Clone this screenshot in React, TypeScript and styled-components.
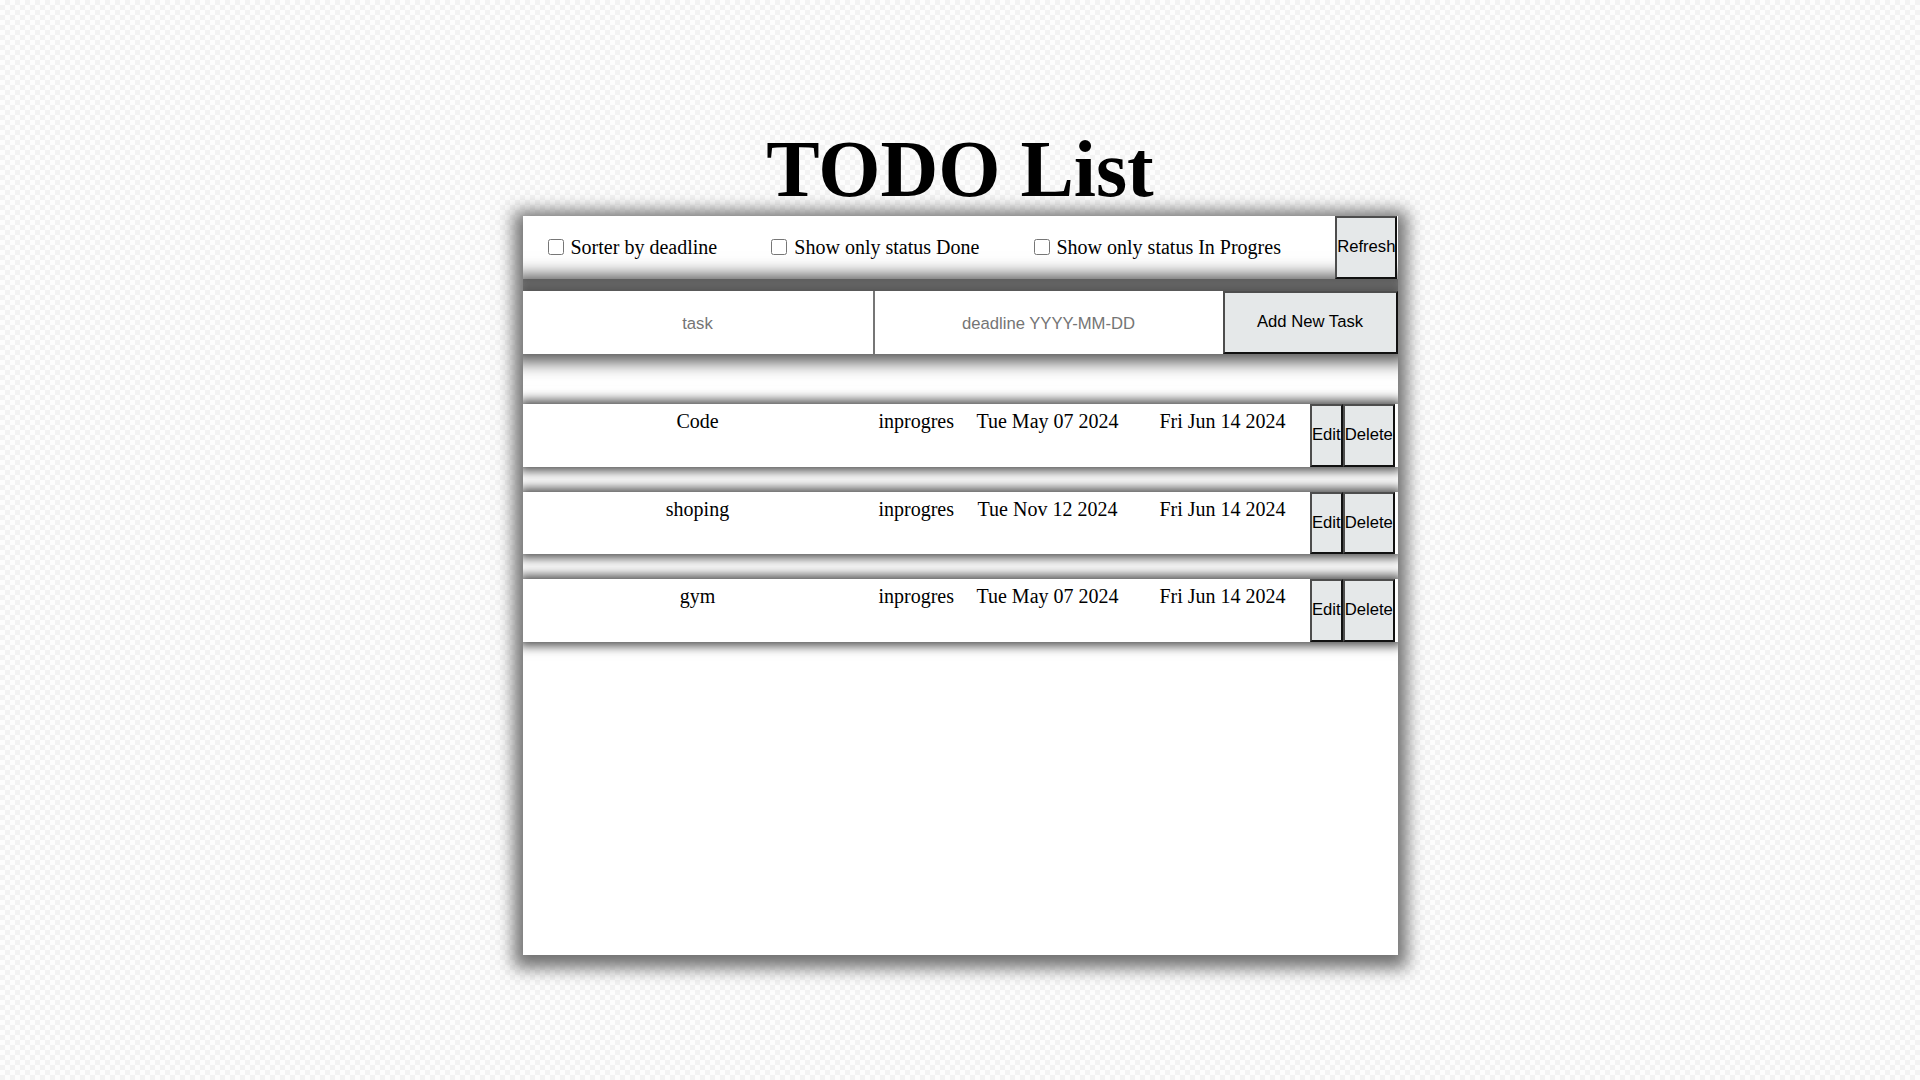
import React from "react";
import styled, { createGlobalStyle } from "styled-components";

const GlobalStyle = createGlobalStyle`
  html, body { margin: 0; padding: 0; }
  body {
    min-height: 100vh;
    background-color: #fafafa;
    background-image: repeating-conic-gradient(#f3f3f3 0% 25%, #fdfdfd 0% 50%);
    background-size: 10px 10px;
    font-family: "Liberation Serif", "Times New Roman", serif;
    color: #000;
  }
`;

const Page = styled.div`
  display: flex;
  flex-direction: column;
  align-items: center;
  padding-top: 125px;
`;

const Title = styled.h1`
  margin: 0;
  font-family: "Liberation Serif", "Times New Roman", serif;
  font-size: 80px;
  line-height: 88px;
  font-weight: 700;
`;

const Panel = styled.main`
  margin-top: 3px;
  width: 875px;
  height: 739px;
  background: #fff;
  box-shadow: 0 4px 16px 9px rgb(112, 112, 112);
  overflow: hidden;
`;

const FilterBar = styled.div`
  display: flex;
  justify-content: space-between;
  align-items: stretch;
  height: 62.5px;
  box-sizing: border-box;
  padding-left: 25px;
  background: #fff;
  box-shadow: 0 0 8px 4px #555;
`;

const FilterLabel = styled.label`
  display: flex;
  align-items: center;
  gap: 7px;
  font-size: 20px;
  white-space: nowrap;
`;

const Check = styled.input.attrs({ type: "checkbox" })`
  width: 16px;
  height: 16px;
  margin: 0;
`;

const Button = styled.button`
  font-family: "Liberation Sans", Arial, sans-serif;
  font-size: 16.67px;
  color: #000;
  background: #e5e8e9;
  border-style: solid;
  border-width: 2px;
  border-color: #4d4d4d #111 #111 #4d4d4d;
  padding: 0;
  margin: 0;
  white-space: nowrap;
`;

const AddButton = styled(Button)`
  width: 20%;
`;

const InputRow = styled.form`
  display: flex;
  height: 62.5px;
  margin-top: 12.5px;
  background: #fff;
  box-shadow: 0 -4px 16px 12px #555;
`;

const Field = styled.input<{ $divider?: boolean }>`
  width: 40%;
  box-sizing: border-box;
  border: none;
  border-left: ${(p) => (p.$divider ? "2px solid #767676" : "none")};
  outline: none;
  margin: 0;
  padding: 3px 0 0;
  background: #fff;
  font-family: "Liberation Sans", Arial, sans-serif;
  font-size: 16.67px;
  text-align: center;
  &::placeholder { color: #757575; }
`;

const TaskList = styled.ul`
  list-style: none;
  margin: 50.5px 0 0;
  padding: 0;
`;

const TaskRow = styled.li`
  display: flex;
  height: 62.5px;
  background: #fff;
  box-shadow: 0 0 10px 4px #505050;
  & + & { margin-top: 25px; }
`;

const Cell = styled.span<{ $w: number }>`
  width: ${(p) => p.$w}%;
  box-sizing: border-box;
  padding-top: 6px;
  text-align: center;
  font-size: 20px;
  white-space: nowrap;
`;

const tasks = [
  { name: "Code", status: "inprogres", created: "Tue May 07 2024", deadline: "Fri Jun 14 2024" },
  { name: "shoping", status: "inprogres", created: "Tue Nov 12 2024", deadline: "Fri Jun 14 2024" },
  { name: "gym", status: "inprogres", created: "Tue May 07 2024", deadline: "Fri Jun 14 2024" },
];

export default function App() {
  return (
    <>
      <GlobalStyle />
      <Page>
        <Title>TODO List</Title>
        <Panel>
          <FilterBar>
            <FilterLabel>
              <Check />
              Sorter by deadline
            </FilterLabel>
            <FilterLabel>
              <Check />
              Show only status Done
            </FilterLabel>
            <FilterLabel>
              <Check />
              Show only status In Progres
            </FilterLabel>
            <Button type="button">Refresh</Button>
          </FilterBar>
          <InputRow onSubmit={(e) => e.preventDefault()}>
            <Field placeholder="task" />
            <Field placeholder="deadline YYYY-MM-DD" $divider />
            <AddButton type="submit">Add New Task</AddButton>
          </InputRow>
          <TaskList>
            {tasks.map((t) => (
              <TaskRow key={t.name}>
                <Cell $w={40}>{t.name}</Cell>
                <Cell $w={10}>{t.status}</Cell>
                <Cell $w={20}>{t.created}</Cell>
                <Cell $w={20}>{t.deadline}</Cell>
                <Button type="button">Edit</Button>
                <Button type="button">Delete</Button>
              </TaskRow>
            ))}
          </TaskList>
        </Panel>
      </Page>
    </>
  );
}
